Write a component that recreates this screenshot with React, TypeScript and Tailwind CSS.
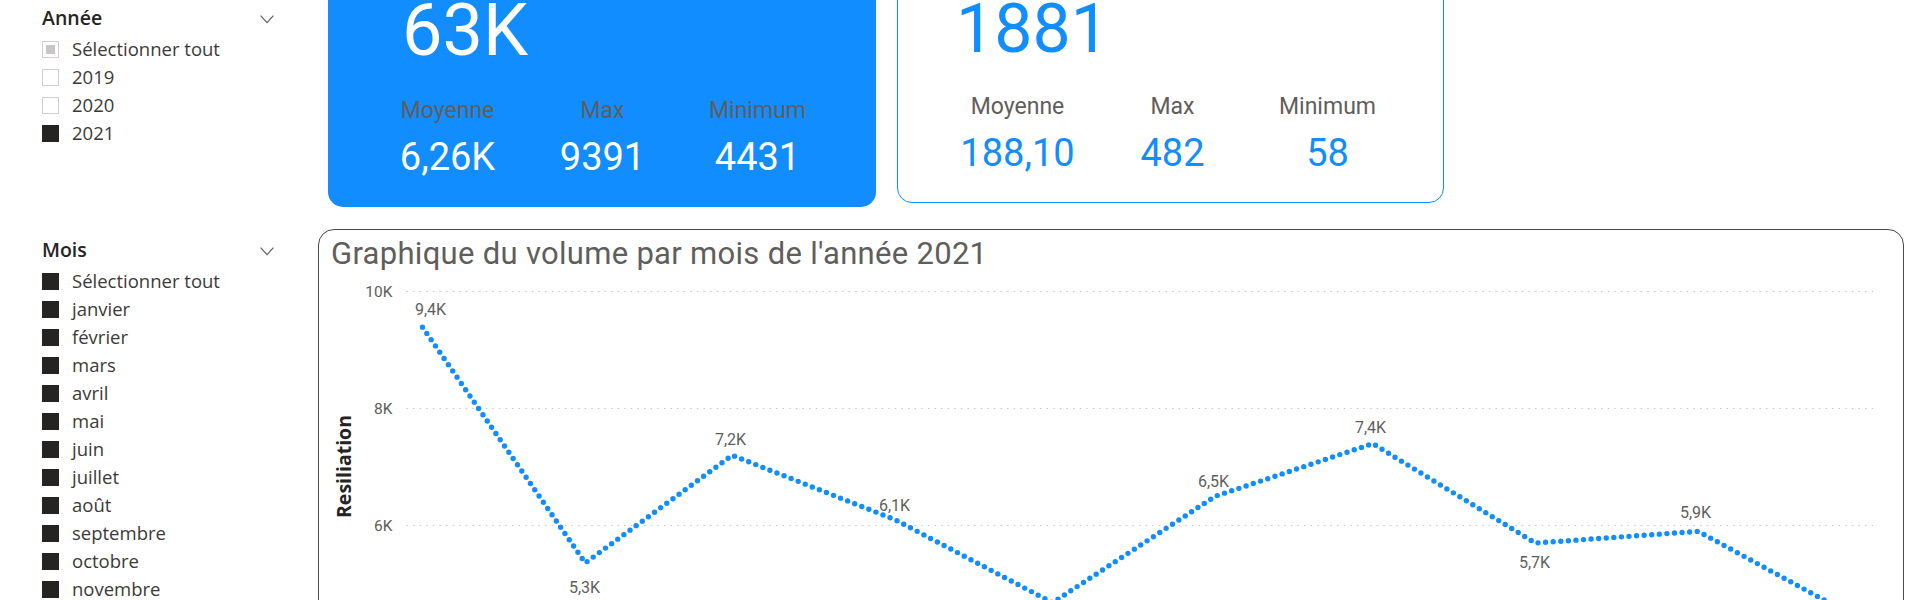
import React from "react";

type CheckState = "on" | "off" | "partial";

function Check({ state }: { state: CheckState }) {
  if (state === "on") {
    return <span className="block w-[17px] h-[17px] shrink-0 bg-[#252423]" />;
  }
  if (state === "off") {
    return <span className="block w-[17px] h-[17px] shrink-0 bg-white border border-[#d2d0ce]" />;
  }
  return (
    <span className="flex items-center justify-center w-[17px] h-[17px] shrink-0 bg-white border border-[#d2d0ce]">
      <span className="block w-[9px] h-[9px] bg-[#c8c6c4]" />
    </span>
  );
}

function Slicer({ title, items }: { title: string; items: { label: string; state: CheckState }[] }) {
  return (
    <div className="w-[232px]">
      <div className="flex items-center justify-between h-[28px] mb-[3px]">
        <span className="text-[19.5px] leading-[28px] font-semibold text-[#252423]">{title}</span>
        <svg width="14" height="9" viewBox="0 0 14 9" className="block mt-[2px]">
          <polyline points="0.6,0.6 7,7.6 13.4,0.6" fill="none" stroke="#605e5c" strokeWidth="1.2" />
        </svg>
      </div>
      {items.map((it) => (
        <div key={it.label} className="flex items-center h-[28px]">
          <Check state={it.state} />
          <span className="ml-[13px] text-[18.5px] leading-[28px] text-[#3b3a39] whitespace-nowrap">{it.label}</span>
        </div>
      ))}
    </div>
  );
}

const months = [
  "Sélectionner tout",
  "janvier",
  "février",
  "mars",
  "avril",
  "mai",
  "juin",
  "juillet",
  "août",
  "septembre",
  "octobre",
  "novembre",
  "décembre",
];

function Stat({ label, value, dark }: { label: string; value: string; dark?: boolean }) {
  return (
    <div className="flex flex-col items-center">
      <span className="text-[23px] leading-[23px] text-[#605e5c] whitespace-nowrap">{label}</span>
      <span
        className={
          dark
            ? "mt-[16px] text-[38px] leading-[38px] text-[#118dff] whitespace-nowrap"
            : "mt-[16px] text-[38px] leading-[38px] text-white whitespace-nowrap"
        }
      >
        {value}
      </span>
    </div>
  );
}

// continuous date axis: x = 423 + days * 5.25 ; y = 292 + (10 - v) * 58.5
const days = [0, 31, 59, 90, 120, 151, 181, 212, 243, 273];
const values = [9.391, 5.36, 7.2, 6.1, 4.68, 6.5, 7.4, 5.7, 5.9, 4.431];
const labels: { t: string; x: number; y: number }[] = [
  { t: "9,4K", x: 431, y: 315.5 },
  { t: "5,3K", x: 585, y: 593.5 },
  { t: "7,2K", x: 731, y: 445.5 },
  { t: "6,1K", x: 895, y: 511.5 },
  { t: "4,7K", x: 1053, y: 630 },
  { t: "6,5K", x: 1214, y: 487.5 },
  { t: "7,4K", x: 1371, y: 433.5 },
  { t: "5,7K", x: 1535, y: 568.5 },
  { t: "5,9K", x: 1696, y: 518.5 },
  { t: "4,4K", x: 1856, y: 646 },
];

function Chart() {
  const pts = days
    .map((d, i) => `${(423 + d * 5.25).toFixed(2)},${(292 + (10 - values[i]) * 58.5).toFixed(2)}`)
    .join(" ");
  const grid = [
    { y: 292, t: "10K" },
    { y: 409, t: "8K" },
    { y: 526, t: "6K" },
    { y: 643, t: "4K" },
  ];
  return (
    <div className="mt-[22px] w-[1586px] h-[420px] shrink-0 border-[1.5px] border-[#4a4a4a] rounded-[16px] bg-white">
      <div className="pt-[8px] pl-[12px] text-[31px] leading-[31px] tracking-[0.3px] text-[#605e5c] whitespace-nowrap">
        Graphique du volume par mois de l'année 2021
      </div>
      <svg width="1583" height="380" viewBox="319.5 269.5 1583 380" className="block">
        {grid.map((g) => (
          <g key={g.t}>
            <line x1="407" x2="1876" y1={g.y} y2={g.y} stroke="#c8c6c4" strokeWidth="1.2" strokeDasharray="1.4 5.2" />
            <text x="393" y={g.y + 5.5} textAnchor="end" fontSize="15.5" fill="#605e5c" fontFamily="Roboto, sans-serif">
              {g.t}
            </text>
          </g>
        ))}
        <text
          x="344"
          y="467"
          transform="rotate(-90 344 467)"
          textAnchor="middle"
          dominantBaseline="central"
          fontSize="19.5"
          fontWeight="700"
          fill="#252423"
          fontFamily="'Open Sans', sans-serif"
        >
          Resiliation
        </text>
        <polyline
          points={pts}
          fill="none"
          stroke="#118dff"
          strokeWidth="5.4"
          strokeLinecap="round"
          strokeLinejoin="round"
          strokeDasharray="0 7.6"
        />
        {labels.map((l) => (
          <text key={l.t + l.x} x={l.x} y={l.y} textAnchor="middle" fontSize="16" fill="#605e5c" fontFamily="Roboto, sans-serif">
            {l.t}
          </text>
        ))}
      </svg>
    </div>
  );
}

export default function App() {
  return (
    <div className="w-[1920px] h-[600px] overflow-hidden bg-white flex">
      <div className="w-[318px] shrink-0 pl-[42px] pt-[4px] font-['Open_Sans',sans-serif]">
        <Slicer
          title="Année"
          items={[
            { label: "Sélectionner tout", state: "partial" },
            { label: "2019", state: "off" },
            { label: "2020", state: "off" },
            { label: "2021", state: "on" },
          ]}
        />
        <div className="mt-[89px]">
          <Slicer title="Mois" items={months.map((m) => ({ label: m, state: "on" as CheckState }))} />
        </div>
      </div>
      <div className="flex-1 flex flex-col font-['Roboto',sans-serif]">
        <div className="flex items-start gap-[21px] pl-[10px] mt-[-40px]">
          <div className="w-[548px] h-[247px] shrink-0 rounded-[15px] bg-[#118dff] pt-[35px]">
            <div className="pl-[74px] text-[72px] leading-[72px] text-white">63K</div>
            <div className="grid grid-cols-3 w-[465px] ml-[42px] mt-[32px]">
              <Stat label="Moyenne" value="6,26K" />
              <Stat label="Max" value="9391" />
              <Stat label="Minimum" value="4431" />
            </div>
          </div>
          <div className="w-[547px] h-[243px] shrink-0 rounded-[15px] border-[1.5px] border-[#118dff] bg-white pt-[34px]">
            <div className="pl-[58px] text-[68px] leading-[68px] text-[#118dff]">1881</div>
            <div className="grid grid-cols-3 w-[465px] ml-[42px] mt-[32px]">
              <Stat label="Moyenne" value="188,10" dark />
              <Stat label="Max" value="482" dark />
              <Stat label="Minimum" value="58" dark />
            </div>
          </div>
        </div>
        <Chart />
      </div>
    </div>
  );
}
